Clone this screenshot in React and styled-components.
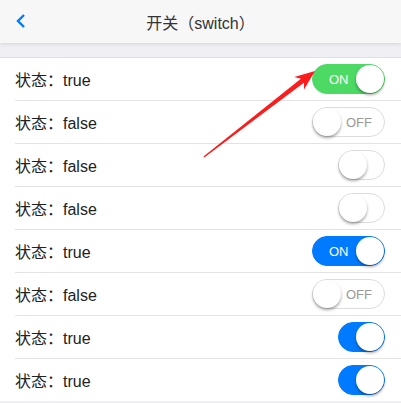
import React from 'react'
import styled, { createGlobalStyle } from 'styled-components'

const GlobalStyle = createGlobalStyle`
  html, body {
    margin: 0;
    padding: 0;
    background: #efeff4;
    font-family: "Liberation Sans", "Noto Sans CJK SC", sans-serif;
  }
`

const Page = styled.div`
  position: relative;
  width: 401px;
  height: 403px;
  overflow: hidden;
  background: #efeff4;
`

const Header = styled.div`
  position: relative;
  z-index: 1;
  height: 43px;
  display: flex;
  align-items: center;
  justify-content: center;
  background: #f7f7f7;
  box-shadow: 0 1px 4px rgba(0, 0, 0, 0.12);
`

const Back = styled.svg`
  position: absolute;
  left: 15px;
  top: 13px;
`

const Title = styled.div`
  font-size: 16px;
  color: #333;
`

const List = styled.div`
  margin-top: 14px;
  background: #fff;
  border-top: 1px solid #e0e0e0;
`

const Row = styled.div`
  height: 42px;
  margin-left: 15px;
  padding-right: 16px;
  display: flex;
  align-items: center;
  justify-content: space-between;
  border-bottom: 1px solid #e3e3e3;
  &:last-child {
    border-bottom: none;
  }
`

const Label = styled.span`
  font-size: 16px;
  color: #222;
`

const Track = styled.div`
  position: relative;
  box-sizing: border-box;
  width: ${({ wide }) => (wide ? 73 : 47)}px;
  height: 30px;
  border-radius: 15px;
  border: 1px solid ${({ on, color }) => (on ? color : '#dcdcdc')};
  background: ${({ on, color }) => (on ? color : '#fff')};
  display: flex;
  align-items: center;
  justify-content: ${({ on }) => (on ? 'flex-start' : 'flex-end')};
  padding: 0 ${({ on }) => (on ? '0 0 15px' : '12px 0 0')};
`

const Text = styled.span`
  font-size: 13px;
  color: ${({ on }) => (on ? '#fff' : '#999')};
  ${({ on }) => (on ? 'padding-left: 1px;' : 'padding-right: 0;')}
`

const Knob = styled.div`
  position: absolute;
  top: 0;
  ${({ on }) => (on ? 'right: 0;' : 'left: 0;')}
  width: 28px;
  height: 28px;
  border-radius: 50%;
  background: #fff;
  box-shadow: 0 2px 3px rgba(0, 0, 0, 0.35);
`

const Arrow = styled.svg`
  position: absolute;
  left: 0;
  top: 0;
  pointer-events: none;
`

const Switch = ({ on, wide, color }) => (
  <Track on={on} wide={wide} color={color}>
    {wide && <Text on={on}>{on ? 'ON' : 'OFF'}</Text>}
    <Knob on={on} />
  </Track>
)

const rows = [
  { on: true, wide: true, color: '#4cd964' },
  { on: false, wide: true },
  { on: false },
  { on: false },
  { on: true, wide: true, color: '#007aff' },
  { on: false, wide: true },
  { on: true, color: '#007aff' },
  { on: true, color: '#007aff' }
]

export default function App() {
  return (
    <Page>
      <GlobalStyle />
      <Header>
        <Back width="12" height="16" viewBox="0 0 12 16">
          <path d="M9 2 L3 8 L9 14" fill="none" stroke="#007aff" strokeWidth="2.4" />
        </Back>
        <Title>开关（switch）</Title>
      </Header>
      <List>
        {rows.map((r, i) => (
          <Row key={i}>
            <Label>状态：{r.on ? 'true' : 'false'}</Label>
            <Switch {...r} />
          </Row>
        ))}
      </List>
      <Arrow width="401" height="403">
        <polygon
          points="203.5,156.6 300.9,78.8 294.3,76.9 315,71 304.1,89.5 303.9,82.8 204.3,157.4"
          fill="#fb1d1d"
        />
      </Arrow>
    </Page>
  )
}
